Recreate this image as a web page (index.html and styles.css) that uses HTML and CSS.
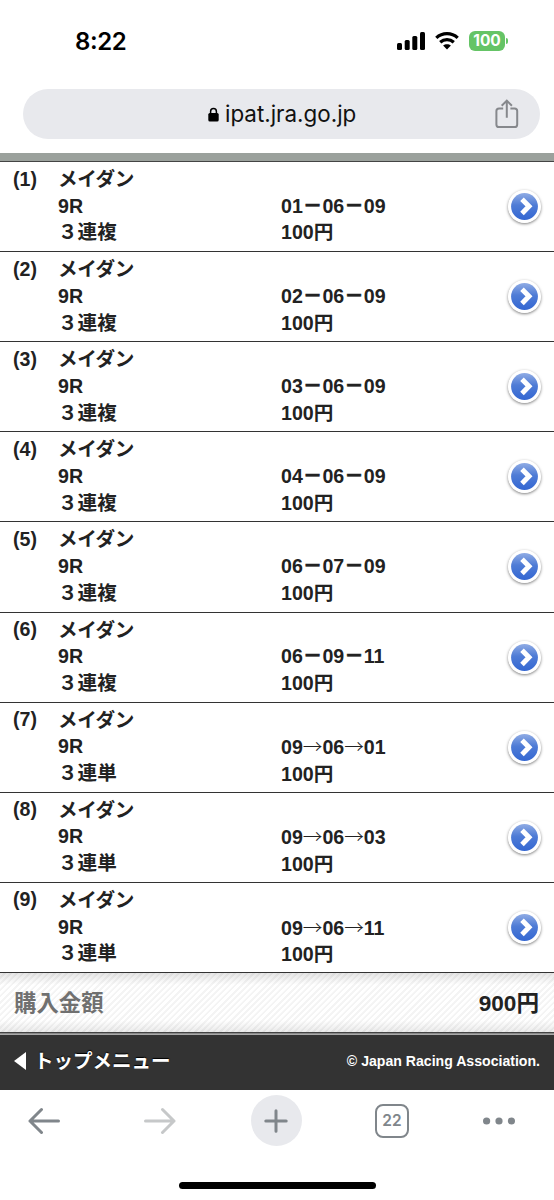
FILE: index.html
```html
<!DOCTYPE html>
<html lang="ja">
<head>
<meta charset="utf-8">
<title>ipat.jra.go.jp</title>
<link rel="stylesheet" href="styles.css">
</head>
<body>

<svg width="0" height="0" class="defs">
<defs>
<linearGradient id="blue" x1="0" y1="0" x2="0" y2="1">
<stop offset="0" stop-color="#8fabe4"/>
<stop offset=".45" stop-color="#4f7cd6"/>
<stop offset="1" stop-color="#3467d2"/>
</linearGradient>
<symbol id="go" viewBox="0 0 33 33">
<circle cx="16.5" cy="16.5" r="16.3" fill="#fff"/>
<circle cx="16.5" cy="16.5" r="13.4" fill="url(#blue)"/>
<path d="M14 9.2L21 16.3L14 23.4" fill="none" stroke="#fff" stroke-width="5"/>
</symbol>
</defs>
</svg>

<!-- status bar -->
<div class="status">
<span class="time">8<span class="colon">:</span>22</span>
<span class="signs">
<svg class="signal" width="28" height="18" viewBox="0 0 28 18">
<rect x="0" y="11" width="5" height="7" rx="1.5"/>
<rect x="7.7" y="8" width="5" height="10" rx="1.5"/>
<rect x="15.3" y="4" width="5" height="14" rx="1.5"/>
<rect x="23" y="0" width="5" height="18" rx="1.5"/>
</svg>
<svg class="wifi" width="24" height="18" viewBox="0 0 24 18">
<path d="M1.3 5.9C7.4.3 16.6.3 22.7 5.9M5.2 10.2C9.2 6.7 14.8 6.7 18.8 10.2" fill="none" stroke="#000" stroke-width="3.3"/>
<path d="M12 17.5L8.1 13.6C10.3 11.7 13.7 11.7 15.9 13.6Z"/>
</svg>
<span class="battery">100</span><span class="cap"></span>
</span>
</div>

<!-- address bar -->
<div class="address">
<svg class="lock" width="11" height="15" viewBox="0 0 11 15">
<rect x=".3" y="6" width="10.4" height="8.6" rx="1.6"/>
<path d="M2.6 7V4.4A2.9 2.9 0 0 1 8.4 4.4V7" fill="none" stroke="#000" stroke-width="1.5"/>
</svg>
<span class="url">ipat.jra.go.jp</span>
<svg class="share" width="24" height="30" viewBox="0 0 24 30">
<path d="M8.2 9.5H4A2.6 2.6 0 0 0 1.4 12.1V25.4A2.6 2.6 0 0 0 4 28H19.6A2.6 2.6 0 0 0 22.2 25.4V12.1A2.6 2.6 0 0 0 19.6 9.5H15.4M11.8 18.8V2M6.7 6.7L11.8 1.6L16.9 6.7"/>
</svg>
</div>

<div class="bar"></div>

<!-- bet list -->
<div class="list">
<div class="row">
<div class="no">(1)</div>
<div class="race"><span class="place">メイダン</span><br>9R<br>３連複</div>
<div class="bet">01<b>－</b>06<b>－</b>09<br>100円</div>
<svg class="go"><use href="#go"/></svg>
</div>
<div class="row">
<div class="no">(2)</div>
<div class="race"><span class="place">メイダン</span><br>9R<br>３連複</div>
<div class="bet">02<b>－</b>06<b>－</b>09<br>100円</div>
<svg class="go"><use href="#go"/></svg>
</div>
<div class="row">
<div class="no">(3)</div>
<div class="race"><span class="place">メイダン</span><br>9R<br>３連複</div>
<div class="bet">03<b>－</b>06<b>－</b>09<br>100円</div>
<svg class="go"><use href="#go"/></svg>
</div>
<div class="row">
<div class="no">(4)</div>
<div class="race"><span class="place">メイダン</span><br>9R<br>３連複</div>
<div class="bet">04<b>－</b>06<b>－</b>09<br>100円</div>
<svg class="go"><use href="#go"/></svg>
</div>
<div class="row">
<div class="no">(5)</div>
<div class="race"><span class="place">メイダン</span><br>9R<br>３連複</div>
<div class="bet">06<b>－</b>07<b>－</b>09<br>100円</div>
<svg class="go"><use href="#go"/></svg>
</div>
<div class="row">
<div class="no">(6)</div>
<div class="race"><span class="place">メイダン</span><br>9R<br>３連複</div>
<div class="bet">06<b>－</b>09<b>－</b>11<br>100円</div>
<svg class="go"><use href="#go"/></svg>
</div>
<div class="row">
<div class="no">(7)</div>
<div class="race"><span class="place">メイダン</span><br>9R<br>３連単</div>
<div class="bet">09<i>→</i>06<i>→</i>01<br>100円</div>
<svg class="go"><use href="#go"/></svg>
</div>
<div class="row">
<div class="no">(8)</div>
<div class="race"><span class="place">メイダン</span><br>9R<br>３連単</div>
<div class="bet">09<i>→</i>06<i>→</i>03<br>100円</div>
<svg class="go"><use href="#go"/></svg>
</div>
<div class="row">
<div class="no">(9)</div>
<div class="race"><span class="place">メイダン</span><br>9R<br>３連単</div>
<div class="bet">09<i>→</i>06<i>→</i>11<br>100円</div>
<svg class="go"><use href="#go"/></svg>
</div>
</div>

<div class="total">
<span class="label">購入金額</span>
<span class="sum">900円</span>
</div>

<div class="footer">
<span class="top"><svg width="12" height="18" viewBox="0 0 12 18"><path d="M0 9L12 0V18Z" fill="#fff"/></svg>トップメニュー</span>
<span class="copy">© Japan Racing Association.</span>
</div>

<!-- browser toolbar -->
<div class="tools">
<span class="tool"><svg width="32" height="28" viewBox="0 0 32 28"><path class="line" d="M30.5 14H2M13.5 2.5L2 14L13.5 25.5"/></svg></span>
<span class="tool off"><svg width="32" height="28" viewBox="0 0 32 28"><path class="line" d="M1.5 14H30M18.5 2.5L30 14L18.5 25.5"/></svg></span>
<span class="tool"><span class="plus"><svg width="24" height="24" viewBox="0 0 24 24"><path class="line" d="M1.8 12H22.2M12 1.8V22.2"/></svg></span></span>
<span class="tool"><span class="tabs">22</span></span>
<span class="tool more"><svg width="32" height="8" viewBox="0 0 32 8"><circle cx="3.6" cy="4" r="3.6"/><circle cx="16" cy="4" r="3.6"/><circle cx="28.4" cy="4" r="3.6"/></svg></span>
</div>
<div class="home"></div>

</body>
</html>
```
FILE: styles.css
```css
body { margin: 0; width: 554px; height: 1200px; overflow: hidden; background: #fff; color: #222; font-family: "Liberation Sans", "Noto Sans CJK JP", sans-serif }
svg { display: block; flex: none }
.defs { position: absolute }

.status { display: flex; justify-content: space-between; height: 89px; box-sizing: border-box; padding: 27px 46px 0 75px }
.time { font: 600 24px/29px Inter, sans-serif; color: #000; letter-spacing: -.4px }
.colon { display: inline-block; transform: translateY(-1px) }
.signs { display: flex; align-items: center; height: 28px }
.wifi { margin: 0 10px 0 10px }
.battery { width: 36px; height: 20px; border-radius: 6px; background: #65c466; color: #fff; font: 700 15.5px/20px Inter, sans-serif; text-align: center }
.cap { width: 2px; height: 6px; margin-left: 1px; border-radius: 0 2px 2px 0; background: #65c466 }

.address { display: flex; align-items: center; height: 50px; margin: 0 14px 0 23px; border-radius: 25px; background: #e8e9ed; box-sizing: border-box; padding: 0 21px 0 185px }
.url { margin-left: 6px; font: 400 22.4px/50px Inter, sans-serif; color: #111 }
.share { margin-left: auto; fill: none; stroke: #86888c; stroke-width: 2 }

.bar { height: 9px; margin-top: 14px; background: #9ba19c; border-bottom: 1px solid #444; box-sizing: border-box }

.list { font-size: 19.6px; font-weight: bold; line-height: 26.7px }
.row { display: flex; height: 90.12px; box-sizing: border-box; padding: 4px 13px 0 13px; border-bottom: 1px solid #333 }
.no { width: 45px; margin-top: -.5px }
.race { width: 223px }
.place { letter-spacing: -.4px }
.bet { margin-top: 26.7px }
.bet b { -webkit-text-stroke: .5px #222 }
.bet i { font-style: normal; font-weight: 300; font-family: "Noto Sans CJK JP", sans-serif }
.go { width: 33px; height: 33px; margin: 24px 0 0 auto; border-radius: 50%; box-shadow: 0 1px 3px rgba(0,0,0,.5) }

.total { display: flex; justify-content: space-between; height: 59px; box-sizing: border-box; padding: 0 15px 0 14px; line-height: 62px; font-weight: bold;
  background: linear-gradient(rgba(0,0,0,.1), rgba(0,0,0,0) 20%, rgba(0,0,0,0) 80%, rgba(0,0,0,.08)), repeating-linear-gradient(135deg, #fff 0, #fff 2.2px, #f4f4f4 2.8px, #f4f4f4 4.4px) }
.label { font-size: 22.4px; color: #707070 }
.sum { font-size: 22.6px }

.footer { display: flex; justify-content: space-between; height: 58px; box-sizing: border-box; padding: 0 14px; border-top: 1px solid #444; background: linear-gradient(#888 1px, #aaa 1px, #aaa 2px, #333 2px); color: #fff; font-weight: bold; line-height: 57px }
.top { display: flex; align-items: center; gap: 8px; font-size: 19.5px; text-shadow: 0 -1px 1px #000 }
.copy { font-size: 14.1px }

.tools { display: flex; align-items: center; height: 62px; margin-left: -14px; fill: #80868b; color: #80868b }
.tool { display: flex; flex: none; width: 116px; justify-content: center }
.more { width: 98px }
.line { fill: none; stroke: #80868b; stroke-width: 3; stroke-linecap: round; stroke-linejoin: round }
.off .line { stroke: #c6c8c9 }
.plus { display: flex; align-items: center; justify-content: center; width: 51px; height: 51px; border-radius: 50%; background: #e8e9ed }
.tabs { width: 34px; height: 34px; box-sizing: border-box; border: 2.5px solid #80868b; border-radius: 8px; font: 600 15.5px/30px Inter, sans-serif; text-align: center }
.home { width: 197px; height: 7px; margin: 30px auto 0; border-radius: 4px; background: #000 }
```
